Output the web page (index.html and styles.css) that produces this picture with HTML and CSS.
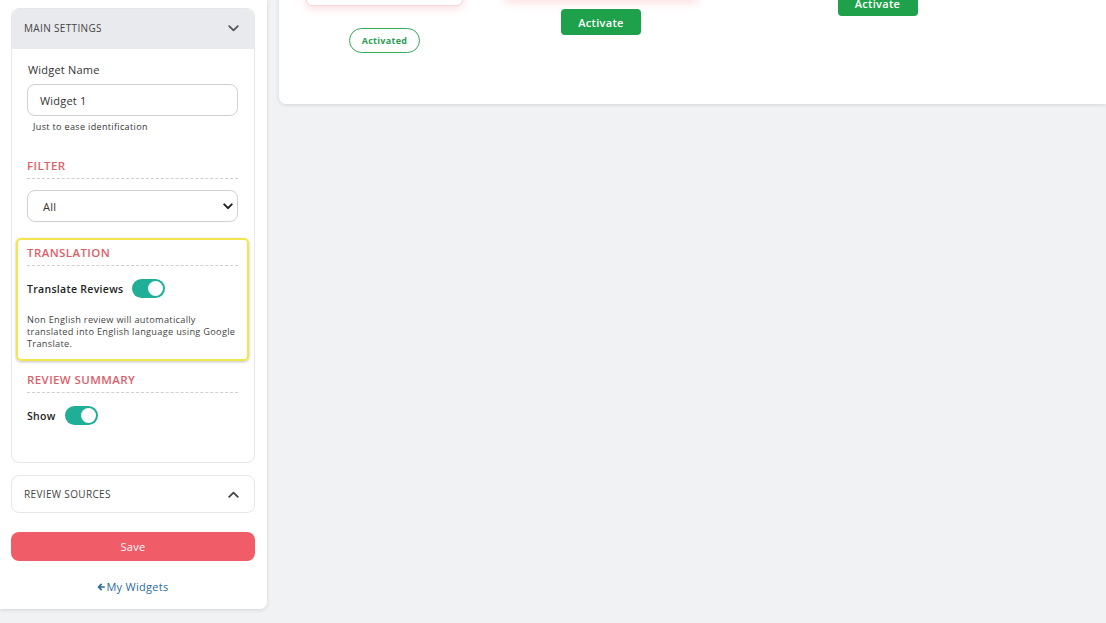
FILE: index.html
```html
<!DOCTYPE html>
<html lang="en">
<head>
<meta charset="utf-8">
<title>Widget settings</title>
<link rel="stylesheet" href="styles.css">
</head>
<body>
<aside class="sidebar">
  <section class="acc acc-open">
    <header class="acc-head">
      <span>MAIN SETTINGS</span>
      <svg class="chev" width="11" height="7" viewBox="0 0 11 7"><path d="M1.2 1.2 5.5 5.3 9.8 1.2" fill="none" stroke="#555" stroke-width="1.8" stroke-linecap="round" stroke-linejoin="round"/></svg>
    </header>
    <div class="acc-body">
      <label class="lbl">Widget Name</label>
      <div class="field">Widget 1</div>
      <p class="help">Just to ease identification</p>

      <h3 class="sec">FILTER</h3>
      <div class="field select">
        <span>All</span>
        <svg width="10" height="7" viewBox="0 0 10 7"><path d="M1.3 1.4 5 5.1 8.7 1.4" fill="none" stroke="#222" stroke-width="2" stroke-linecap="round" stroke-linejoin="round"/></svg>
      </div>

      <div class="highlight">
        <h3 class="sec">TRANSLATION</h3>
        <div class="toggle-row">
          <span class="tlabel">Translate Reviews</span>
          <span class="toggle"><span class="knob"></span></span>
        </div>
        <p class="desc">Non English review will automatically translated into English language using Google Translate.</p>
      </div>

      <h3 class="sec sec-summary">REVIEW SUMMARY</h3>
      <div class="toggle-row">
        <span class="tlabel">Show</span>
        <span class="toggle"><span class="knob"></span></span>
      </div>
    </div>
  </section>

  <section class="acc acc-closed">
    <span>REVIEW SOURCES</span>
    <svg class="chev" width="11" height="7" viewBox="0 0 11 7"><path d="M1.2 5.8 5.5 1.7 9.8 5.8" fill="none" stroke="#444" stroke-width="1.8" stroke-linecap="round" stroke-linejoin="round"/></svg>
  </section>

  <button class="save">Save</button>
  <a class="back" href="#"><svg class="arrow" width="8" height="8" viewBox="0 0 8 8"><path d="M7.2 4H1.8M4.2 1.4 1.5 4l2.7 2.6" fill="none" stroke="#2b6b9b" stroke-width="1.7" stroke-linecap="round" stroke-linejoin="round"/></svg>My Widgets</a>
</aside>

<main class="main">
  <div class="cols">
    <div class="col col1">
      <div class="tcard tcard1"></div>
      <span class="pill">Activated</span>
    </div>
    <div class="col col2">
      <div class="tcard tcard2"></div>
      <button class="act">Activate</button>
    </div>
    <div class="col col3">
      <div class="tcard tcard3"></div>
      <button class="act">Activate</button>
    </div>
  </div>
</main>
</body>
</html>
```

FILE: styles.css
```css
* { box-sizing: border-box; }
html, body { margin: 0; padding: 0; }
body {
  width: 1106px;
  height: 623px;
  overflow: hidden;
  background: #f1f2f4;
  font-family: "Open Sans", "Liberation Sans", sans-serif;
  letter-spacing: 0.2px;
  color: #333;
  display: flex;
  align-items: flex-start;
  gap: 12px;
}

/* Sidebar */
.sidebar {
  width: 267px;
  height: 609px;
  background: #fff;
  border-radius: 0 0 7px 0;
  box-shadow: 0 1px 4px rgba(0,0,0,0.12);
  padding: 8px 12px 0 11px;
  display: flex;
  flex-direction: column;
}
.acc {
  border: 1px solid #e6e7ea;
  border-radius: 8px;
  background: #fff;
}
.acc-head {
  height: 40px;
  background: #e9eaed;
  border-radius: 8px 8px 0 0;
  display: flex;
  align-items: center;
  justify-content: space-between;
  padding: 0 15px 2px 12px;
  font-size: 10px;
  letter-spacing: 0.35px;
  color: #444;
  font-weight: 500;
}
.acc-body {
  padding: 14px 16px 37px 15px;
  display: flex;
  flex-direction: column;
}
.lbl {
  font-size: 11px;
  line-height: 14px;
  color: #333;
  margin-left: 1px;
}
.field {
  margin-top: 7px;
  height: 32px;
  border: 1px solid #cfd1d4;
  border-radius: 8px;
  font-size: 11px;
  color: #333;
  display: flex;
  align-items: center;
  padding: 0 12px;
}
.select {
  justify-content: space-between;
  padding: 0 4px 0 15px;
  margin-top: 11px;
}
.help {
  margin: 5px 0 0 6px;
  font-size: 9px;
  line-height: 12px;
  letter-spacing: 0.35px;
  color: #333;
}
.sec {
  margin: 25px 0 0;
  font-size: 11.5px;
  line-height: 16px;
  font-weight: 600;
  letter-spacing: 0.4px;
  color: #dc6068;
  padding-bottom: 4px;
  border-bottom: 1px dashed #cfcfcf;
}
.highlight {
  margin: 16px -11px 0;
  border: 2px solid #f2e64a;
  border-radius: 5px;
  padding: 5px 9px 9px;
  box-shadow: 0 1px 3px rgba(0,0,0,0.25);
}
.highlight .sec { margin-top: 0; }
.sec-summary { margin-top: 11px; }
.toggle-row {
  display: flex;
  align-items: center;
  gap: 9px;
  margin-top: 13px;
}
.tlabel {
  font-size: 10.5px;
  font-weight: 600;
  letter-spacing: 0.3px;
  color: #222;
}
.toggle {
  width: 33px;
  height: 19px;
  border-radius: 10px;
  background: #1fae96;
  display: flex;
  align-items: center;
  justify-content: flex-end;
  padding: 2px;
}
.knob {
  width: 15px;
  height: 15px;
  border-radius: 50%;
  background: #fff;
}
.desc {
  margin: 16px 0 0;
  font-size: 9.2px;
  line-height: 12px;
  letter-spacing: 0.3px;
  color: #444;
}

.acc-closed {
  margin-top: 12px;
  height: 38px;
  display: flex;
  align-items: center;
  justify-content: space-between;
  padding: 0 15px 0 12px;
  font-size: 10px;
  letter-spacing: 0.35px;
  font-weight: 500;
  color: #444;
}
.save {
  margin-top: 19px;
  height: 29px;
  border: 0;
  border-radius: 8px;
  background: #f05c67;
  color: #fff;
  font-family: inherit;
  font-size: 11px;
  letter-spacing: 0.3px;
  font-weight: 500;
}
.back {
  margin-top: 18px;
  align-self: center;
  font-size: 11px;
  letter-spacing: 0.3px;
  color: #2b6b9b;
  text-decoration: none;
  display: flex;
  align-items: center;
}
.arrow { margin-right: 1px; }

/* Main area */
.main {
  flex: 1;
  margin-top: -200px;
  height: 304px;
  background: #fff;
  border-radius: 0 0 0 7px;
  box-shadow: 0 1px 4px rgba(0,0,0,0.12);
}
.cols {
  display: grid;
  grid-template-columns: 211px 222px 331px;
}
.col {
  display: flex;
  flex-direction: column;
  align-items: center;
}
.tcard {
  background: #fff;
  border: 1px solid #f2d6d8;
  border-radius: 6px;
  box-shadow: 0 3px 8px rgba(240, 110, 120, 0.22);
}
.tcard1 { width: 157px; height: 206px; }
.tcard2 { width: 195px; height: 200px; border-color: #fbe3e4; }
.tcard3 { width: 195px; height: 181px; border-color: #fbe3e4; }
.pill {
  margin-top: 22px;
  width: 71px;
  height: 25px;
  border: 1px solid #3aa85b;
  border-radius: 13px;
  font-size: 9px;
  font-weight: 700;
  letter-spacing: 0.3px;
  color: #2f9e52;
  display: flex;
  align-items: center;
  justify-content: center;
}
.act {
  margin-top: 9px;
  width: 80px;
  height: 26px;
  border: 0;
  border-radius: 4px;
  background: #1ea14a;
  color: #fff;
  font-family: inherit;
  font-size: 11px;
  font-weight: 600;
  letter-spacing: 0.3px;
}
```
